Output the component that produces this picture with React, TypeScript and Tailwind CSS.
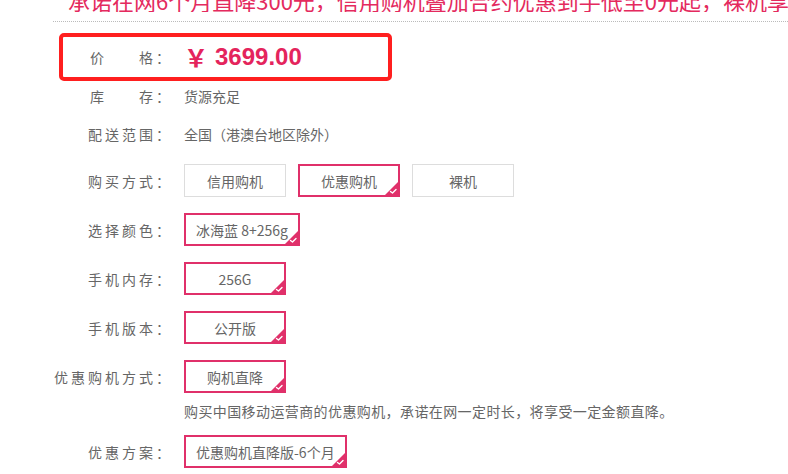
import React from 'react';

const PINK = 'border-[#e0306a]';

const Check: React.FC = () => (
  <svg className="absolute bottom-0 right-0" width="13" height="13" viewBox="0 0 13 13">
    <polygon points="13,0 13,13 0,13" fill="#e0306a" />
    <polyline points="5.5,9.5 7.5,11 11,7.5" fill="none" stroke="#fff" strokeWidth="1.4" strokeLinecap="round" strokeLinejoin="round" />
  </svg>
);

const Option: React.FC<{ text: string; selected?: boolean }> = ({ text, selected }) => (
  <div
    className={`relative h-[33px] min-w-[102px] px-[10px] flex items-center justify-center text-[14px] text-[#666] whitespace-nowrap ${
      selected ? `border-2 ${PINK}` : 'border border-[#ddd]'
    }`}
  >
    {text}
    {selected && <Check />}
  </div>
);

const Row: React.FC<{ label: React.ReactNode; children: React.ReactNode; className?: string }> = ({
  label,
  children,
  className = '',
}) => (
  <div className={`flex items-center ${className}`}>
    <div className="w-[120px] shrink-0 text-right tracking-[3px] text-[14px] leading-[20px] text-[#666] whitespace-nowrap">
      {label}
    </div>
    <div className="ml-[11px] flex items-center gap-[12px] text-[14px] leading-[20px] text-[#666]">{children}</div>
  </div>
);

export default function App() {
  return (
    <div className="w-[788px] h-[474px] overflow-hidden bg-white font-['Noto_Sans_CJK_SC',sans-serif]">
      {/* promo headline, cut off at top of the crop */}
      <div className="-mt-[12px] pl-[68px] text-[22px] leading-[24px] whitespace-nowrap overflow-hidden text-[#e42a5e]">
        承诺在网6个月直降300元，信用购机叠加合约优惠到手低至0元起，裸机享3000元优惠
      </div>
      <div className="ml-[53px] mt-[9px] border-b border-dotted border-[#bbb]" />

      <div className="pl-[53px]">
        {/* price, with red annotation box */}
        <div className="mt-[11px] ml-[6px] w-[333px] h-[48px] border-4 border-[#ff1f1f] rounded-[5px] flex items-center">
          <div className="w-[110px] shrink-0 text-right tracking-[3px] text-[14px] leading-[20px] text-[#666] whitespace-nowrap">
            <span>价</span>
            <span className="inline-block w-[32px]" />
            <span>格：</span>
          </div>
          <div className="ml-[11px] flex items-center text-[#e4245c] font-bold">
            <span className="text-[24px] leading-[28px] font-['Noto_Sans_CJK_SC',sans-serif]">￥</span>
            <span className="ml-[7px] text-[24px] leading-[28px] font-['Liberation_Sans',sans-serif]">3699.00</span>
          </div>
        </div>

        <Row
          className="mt-[5px]"
          label={
            <>
              <span>库</span>
              <span className="inline-block w-[32px]" />
              <span>存：</span>
            </>
          }
        >
          货源充足
        </Row>

        <Row className="mt-[18px]" label="配送范围：">
          全国（港澳台地区除外）
        </Row>

        <Row className="mt-[20px]" label="购买方式：">
          <Option text="信用购机" />
          <Option text="优惠购机" selected />
          <Option text="裸机" />
        </Row>

        <Row className="mt-[16px]" label="选择颜色：">
          <Option text="冰海蓝 8+256g" selected />
        </Row>

        <Row className="mt-[16px]" label="手机内存：">
          <Option text="256G" selected />
        </Row>

        <Row className="mt-[16px]" label="手机版本：">
          <Option text="公开版" selected />
        </Row>

        <Row className="mt-[16px]" label="优惠购机方式：">
          <Option text="购机直降" selected />
        </Row>

        <div className="mt-[8px] pl-[131px] text-[14px] leading-[20px] tracking-[0.4px] text-[#666] whitespace-nowrap">
          购买中国移动运营商的优惠购机，承诺在网一定时长，将享受一定金额直降。
        </div>

        <Row className="mt-[14px]" label="优惠方案：">
          <Option text="优惠购机直降版-6个月" selected />
        </Row>
      </div>
    </div>
  );
}
